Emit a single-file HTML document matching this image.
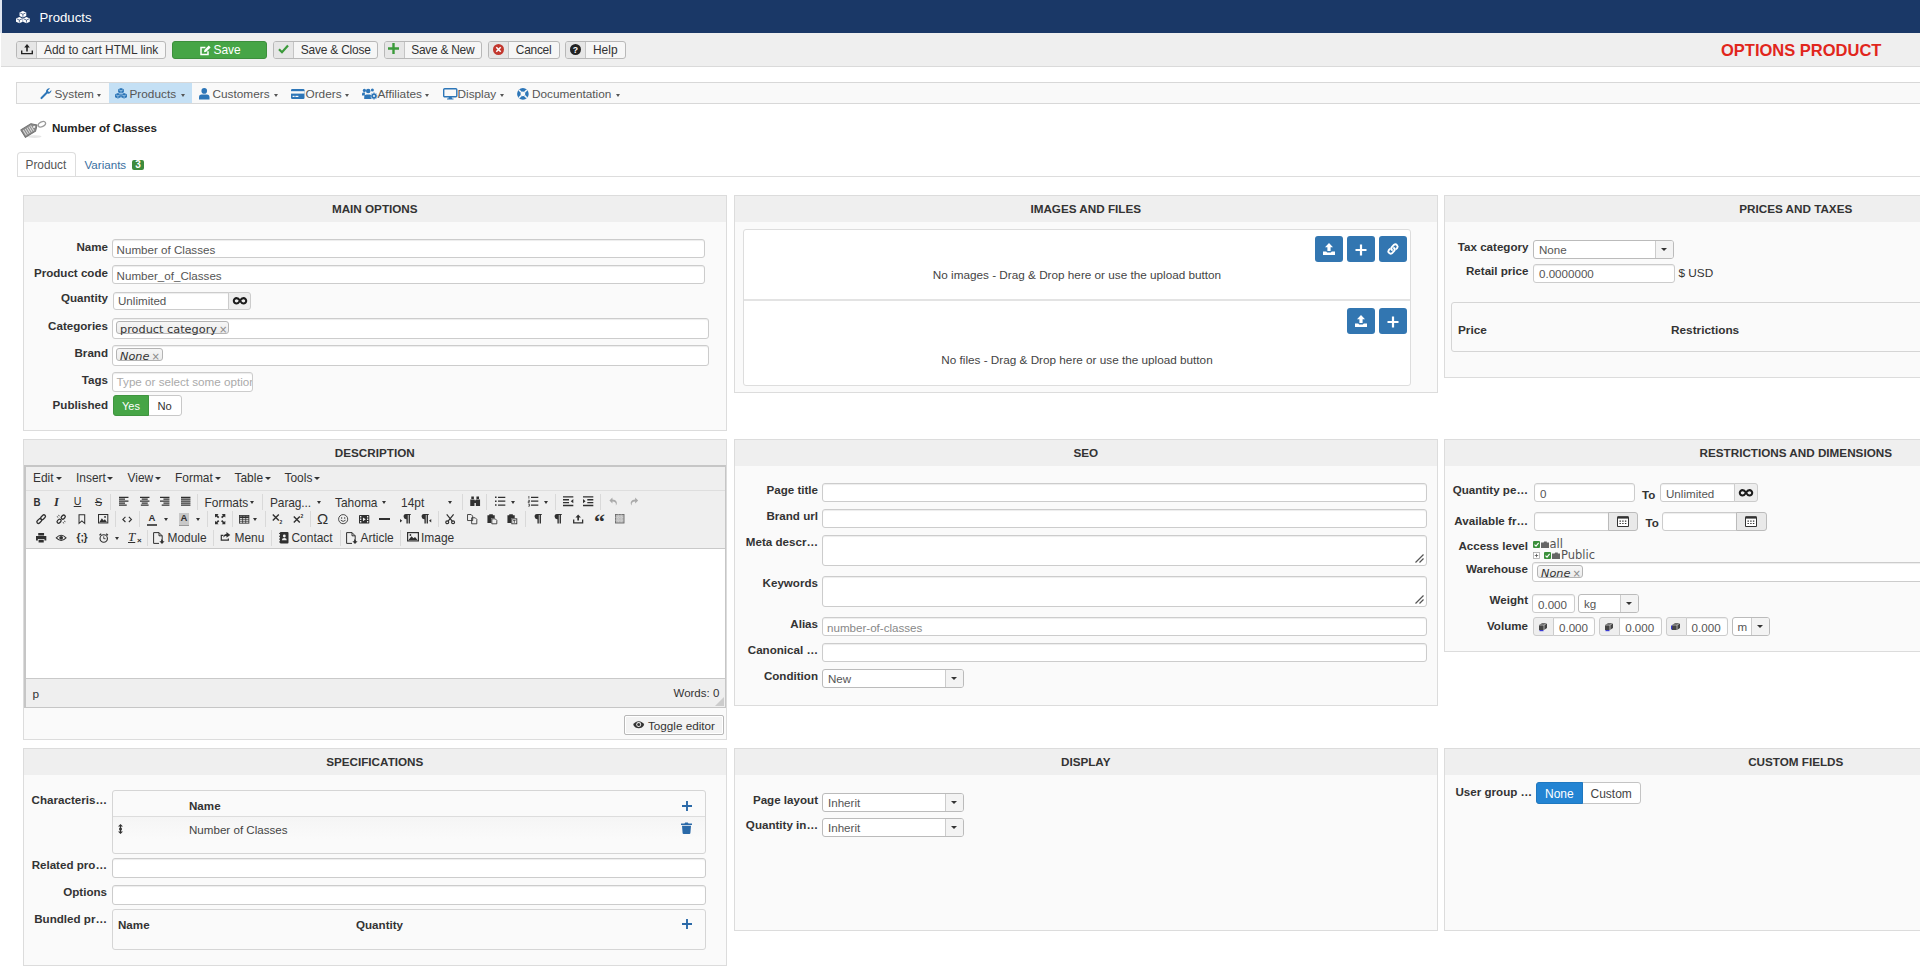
<!DOCTYPE html><html lang="en"><head><meta charset="utf-8"><title>Products</title><style>
*{box-sizing:border-box;margin:0;padding:0}
html,body{width:1920px;height:980px;overflow:hidden;background:#fff}
body{position:relative;font-family:"Liberation Sans",sans-serif;font-size:12px;color:#333}
.a{position:absolute}
.t{position:absolute;white-space:nowrap;line-height:16px;height:16px}
.b{font-weight:bold}
.r{text-align:right}
.lbl{position:absolute;white-space:nowrap;line-height:16px;height:16px;font-weight:bold;text-align:right;font-size:11.6px;color:#333}
.panel{position:absolute;background:#fafafa;border:1px solid #dcdcdc}
.ph{position:absolute;left:0;right:0;top:0;height:26px;background:#efefef;text-align:center;font-weight:bold;font-size:11.7px;line-height:26px;color:#333}
.in{position:absolute;background:#fff;border:1px solid #ccc;border-radius:3px;box-shadow:inset 0 1px 1px rgba(0,0,0,.075);color:#555;font-size:11.6px;line-height:18px;padding-left:4px;white-space:nowrap;overflow:hidden}
.box{position:absolute;background:#fafafa;border:1px solid #d5d5d5;border-radius:3px}
.wbox{position:absolute;background:#fff;border:1px solid #ddd;border-radius:3px}
.sel{position:absolute;background:#fff;border:1px solid #bbb;border-radius:3px;color:#555;font-size:11.6px;line-height:17px;padding-left:5px;white-space:nowrap;overflow:hidden}
.sel i{position:absolute;right:0;top:0;bottom:0;width:18px;background:#f3f3f3;border-left:1px solid #ccc}
.sel i:after{content:"";position:absolute;left:5px;top:7px;border:3.2px solid transparent;border-top:3.5px solid #333;border-bottom:0}
.tag{position:absolute;border:1px solid #b4b4b4;border-radius:3px;background:linear-gradient(#f6f6f6,#ececec);font-family:"DejaVu Sans",sans-serif;font-size:11.3px;line-height:16px;color:#333;white-space:nowrap;padding-left:3px}
.tag u{text-decoration:none;color:#888;font-size:10px;margin-left:2px}
.tbtn{position:absolute;top:41px;height:18px;border:1px solid #b8b8b8;border-radius:3px;background:#f6f6f6;font-size:11.95px;line-height:16px;color:#333;white-space:nowrap;overflow:hidden}
.tbtn b{position:absolute;left:0;top:0;bottom:0;width:20px;background:#e6e6e6;border-right:1px solid #c4c4c4}
.tbtn span{position:absolute;top:0}
.mi{position:absolute;top:85px;height:19px;line-height:19px;font-size:11.8px;color:#555;white-space:nowrap}
.car{position:absolute;width:0;height:0;border:3px solid transparent;border-top:3.5px solid #555;border-bottom:0}
.bb{position:absolute;width:28px;height:26px;background:#3276b1;border-radius:3px}
.ed{font-size:11.95px;color:#333}
.sep{position:absolute;width:1px;height:16px;background:#d9d9d9}
svg{position:absolute;overflow:visible}
</style></head><body>
<div class="a" style="left:0;top:0;width:2px;height:33px;background:#dfe6f1"></div><div class="a" style="left:1.5px;top:0;width:1919px;height:33px;background:#1a3867"></div>
<div class="t" style="left:39.5px;top:10px;color:#fff;font-size:13.2px">Products</div>
<div class="a" style="left:1px;top:33px;width:1919px;height:34px;background:#efefef;border-bottom:1px solid #dadada"></div>
<div class="t b" style="left:1721px;top:40px;height:20px;line-height:20px;font-size:16.5px;color:#e1261c">OPTIONS PRODUCT</div>
<div class="tbtn" style="left:16px;width:150px"><b></b><span style="left:27px;letter-spacing:0px">Add to cart HTML link</span></div>
<div class="a" style="left:171.5px;top:41px;width:95.5px;height:18px;background:#46a546;border:1px solid #3c8f3c;border-radius:3px"></div>
<div class="t" style="left:213.5px;top:42px;color:#fff;font-size:11.95px">Save</div>
<div class="tbtn" style="left:273px;width:105px"><b></b><span style="left:26.69999999999999px;letter-spacing:-0.19px">Save &amp; Close</span></div>
<div class="tbtn" style="left:384px;width:98px"><b></b><span style="left:26.30000000000001px;letter-spacing:-0.27px">Save &amp; New</span></div>
<div class="tbtn" style="left:488px;width:71.5px"><b></b><span style="left:26.799999999999955px;letter-spacing:-0.27px">Cancel</span></div>
<div class="tbtn" style="left:565px;width:60.5px"><b></b><span style="left:27px;letter-spacing:0px">Help</span></div>
<div class="a" style="left:16px;top:82px;width:1910px;height:22px;background:#f9f9f9;border:1px solid #d8d8d8"></div>
<div class="a" style="left:109px;top:83px;width:83px;height:20px;background:#c4e0f5"></div>
<div class="mi" style="left:54.5px">System</div>
<div class="car" style="left:97.3px;top:94px;border-width:2.7px;border-top:3.1px solid #555;border-bottom:0"></div>
<div class="mi" style="left:129.5px">Products</div>
<div class="car" style="left:181.3px;top:94px;border-width:2.7px;border-top:3.1px solid #555;border-bottom:0"></div>
<div class="mi" style="left:212.5px">Customers</div>
<div class="car" style="left:273.8px;top:94px;border-width:2.7px;border-top:3.1px solid #555;border-bottom:0"></div>
<div class="mi" style="left:305.5px">Orders</div>
<div class="car" style="left:345.3px;top:94px;border-width:2.7px;border-top:3.1px solid #555;border-bottom:0"></div>
<div class="mi" style="left:377.5px">Affiliates</div>
<div class="car" style="left:425.3px;top:94px;border-width:2.7px;border-top:3.1px solid #555;border-bottom:0"></div>
<div class="mi" style="left:457.5px">Display</div>
<div class="car" style="left:499.8px;top:94px;border-width:2.7px;border-top:3.1px solid #555;border-bottom:0"></div>
<div class="mi" style="left:532px">Documentation</div>
<div class="car" style="left:615.8px;top:94px;border-width:2.7px;border-top:3.1px solid #555;border-bottom:0"></div>
<div class="t b" style="left:51.9px;top:120px;font-size:11.6px;color:#222">Number of Classes</div>
<div class="a" style="left:17px;top:152px;width:59px;height:25px;background:#fff;border:1px solid #ddd;border-bottom:0;border-radius:4px 4px 0 0"></div>
<div class="a" style="left:17px;top:176px;width:1910px;height:1px;background:#ddd"></div>
<div class="t" style="left:25.5px;top:157px;font-size:11.85px;color:#555">Product</div>
<div class="t" style="left:84.5px;top:157px;font-size:11.6px;color:#3a6f9f">Variants</div>
<div class="a" style="left:132px;top:160px;width:12px;height:10px;background:#3d8b3d;border-radius:2px;color:#fff;font-size:10px;font-weight:bold;line-height:10.5px;text-align:center">3</div>
<div class="panel" style="left:23px;top:195px;width:703.5px;height:236px"><div class="ph">MAIN OPTIONS</div></div>
<div class="panel" style="left:734px;top:195px;width:703.5px;height:198px"><div class="ph">IMAGES AND FILES</div></div>
<div class="panel" style="left:1444px;top:195px;width:703.5px;height:183px"><div class="ph">PRICES AND TAXES</div></div>
<div class="panel" style="left:23px;top:439px;width:703.5px;height:301px"><div class="ph">DESCRIPTION</div></div>
<div class="panel" style="left:734px;top:439px;width:703.5px;height:267px"><div class="ph">SEO</div></div>
<div class="panel" style="left:1444px;top:439px;width:703.5px;height:213px"><div class="ph">RESTRICTIONS AND DIMENSIONS</div></div>
<div class="panel" style="left:23px;top:748px;width:703.5px;height:218px"><div class="ph">SPECIFICATIONS</div></div>
<div class="panel" style="left:734px;top:748px;width:703.5px;height:183px"><div class="ph">DISPLAY</div></div>
<div class="panel" style="left:1444px;top:748px;width:703.5px;height:183px"><div class="ph">CUSTOM FIELDS</div></div>
<svg style="left:15.8px;top:11px" width="13.8" height="12.3" viewBox="0 0 14 12.3"><path d="M3.6 1.5L7.0 0L10.4 1.5V4.9L7.0 6.4L3.6 4.9Z" fill="#fff"/><path d="M4.3 2L7.0 3.2L9.7 2M7.0 3.2V5.8" stroke="#1a3867" stroke-width="0.7" fill="none"/><path d="M0 7.4L3.4 5.9L6.8 7.4V10.8L3.4 12.3L0 10.8Z" fill="#fff"/><path d="M0.7 7.9L3.4 9.100000000000001L6.1 7.9M3.4 9.100000000000001V11.7" stroke="#1a3867" stroke-width="0.7" fill="none"/><path d="M7.2 7.4L10.6 5.9L14.0 7.4V10.8L10.6 12.3L7.2 10.8Z" fill="#fff"/><path d="M7.9 7.9L10.6 9.100000000000001L13.3 7.9M10.6 9.100000000000001V11.7" stroke="#1a3867" stroke-width="0.7" fill="none"/></svg>
<svg style="left:20.8px;top:44px" width="12" height="10.5" viewBox="0 0 12 10.5"><path d="M6 0 8.8 3.4H6.8V7.4H5.2V3.4H3.2Z" fill="#222"/><path d="M0.7 6.6V9.6H11.3V6.6" fill="none" stroke="#222" stroke-width="1.4"/></svg>
<svg style="left:199.5px;top:44.5px" width="11" height="11" viewBox="0 0 11 11"><path d="M8 6.2V9.6H1V2.6H5.4" fill="none" stroke="#fff" stroke-width="1.5"/><path d="M4 7.2 4.4 5 8.8 0.6 10.6 2.4 6.2 6.8Z" fill="#fff"/></svg>
<svg style="left:277.5px;top:43.5px" width="11" height="10" viewBox="0 0 11 10"><path d="M1 5.2 4 8.2 10 1.6" fill="none" stroke="#3a9a3a" stroke-width="2.2"/></svg>
<svg style="left:388px;top:43px" width="11" height="11" viewBox="0 0 11 11"><path d="M5.5 0V11M0 5.5H11" stroke="#3a9a3a" stroke-width="2.4" fill="none"/></svg>
<svg style="left:492.5px;top:44px" width="11" height="11" viewBox="0 0 12 12"><circle cx="6" cy="6" r="6" fill="#c2372e"/><path d="M3.6 3.6 8.4 8.4M8.4 3.6 3.6 8.4" stroke="#fff" stroke-width="1.7"/></svg>
<svg style="left:570px;top:44px" width="11" height="11" viewBox="0 0 12 12"><circle cx="6" cy="6" r="6" fill="#222"/><text x="6" y="9.3" font-size="9.5" font-weight="bold" text-anchor="middle" fill="#fff" font-family="Liberation Sans,sans-serif">?</text></svg>
<svg style="left:39.5px;top:88px" width="11.5" height="11.5" viewBox="0 0 11.5 11.5"><path d="M0.8 9.3 6 4.1A3.3 3.3 0 0 1 10 0.4L7.9 2.5 8.3 3.6 9.4 4 11.4 1.9A3.3 3.3 0 0 1 7.4 5.6L2.2 10.8A1 1 0 0 1 0.8 9.3Z" fill="#2d76b8"/></svg>
<svg style="left:114.5px;top:88px" width="12" height="10.6" viewBox="0 0 14 12.3"><path d="M3.6 1.5L7.0 0L10.4 1.5V4.9L7.0 6.4L3.6 4.9Z" fill="#2d76b8"/><path d="M4.3 2L7.0 3.2L9.7 2M7.0 3.2V5.8" stroke="#c4e0f5" stroke-width="0.7" fill="none"/><path d="M0 7.4L3.4 5.9L6.8 7.4V10.8L3.4 12.3L0 10.8Z" fill="#2d76b8"/><path d="M0.7 7.9L3.4 9.100000000000001L6.1 7.9M3.4 9.100000000000001V11.7" stroke="#c4e0f5" stroke-width="0.7" fill="none"/><path d="M7.2 7.4L10.6 5.9L14.0 7.4V10.8L10.6 12.3L7.2 10.8Z" fill="#2d76b8"/><path d="M7.9 7.9L10.6 9.100000000000001L13.3 7.9M10.6 9.100000000000001V11.7" stroke="#c4e0f5" stroke-width="0.7" fill="none"/></svg>
<svg style="left:198.5px;top:87.5px" width="10.5" height="11.5" viewBox="0 0 10.5 11.5"><circle cx="5.25" cy="2.9" r="2.8" fill="#2d76b8"/><path d="M0 11.5V9.4Q0 6.6 2.6 6.6H7.9Q10.5 6.6 10.5 9.4V11.5Z" fill="#2d76b8"/></svg>
<svg style="left:290.5px;top:88.5px" width="13.5" height="10" viewBox="0 0 13.5 10"><rect x="0" y="0" width="13.5" height="10" rx="1.2" fill="#2d76b8"/><rect x="0" y="2.2" width="13.5" height="2.4" fill="#f9f9f9"/><rect x="1.6" y="6.8" width="2" height="1.2" fill="#f9f9f9"/><rect x="4.4" y="6.8" width="3" height="1.2" fill="#f9f9f9"/></svg>
<svg style="left:362px;top:88px" width="15" height="11" viewBox="0 0 15 11"><circle cx="2.4" cy="2.4" r="1.6" fill="#2d76b8"/><circle cx="6.2" cy="3" r="2.3" fill="#2d76b8"/><circle cx="10.4" cy="2" r="1.5" fill="#2d76b8"/><path d="M0 7.4V6Q0 4.6 1.6 4.6H3.2Q2.4 6 3 7.4ZM2.2 11V9.2Q2.2 6.4 4.6 6.4H7.8Q8.6 6.4 9 7 8.2 9 9.4 11Z" fill="#2d76b8"/><circle cx="12" cy="8" r="2.6" fill="#2d76b8"/><path d="M12 4.6V11.4M8.6 8H15.4M9.6 5.6 14.4 10.4M14.4 5.6 9.6 10.4" stroke="#2d76b8" stroke-width="1.1"/><circle cx="12" cy="8" r="1" fill="#f9f9f9"/></svg>
<svg style="left:442.5px;top:88px" width="14.5" height="11.5" viewBox="0 0 14.5 11.5"><rect x="0.7" y="0.7" width="13.1" height="8" rx="1" fill="none" stroke="#2d76b8" stroke-width="1.4"/><path d="M6 8.6 5.4 10.4H4V11.5H10.5V10.4H9.1L8.5 8.6Z" fill="#2d76b8"/></svg>
<svg style="left:517px;top:87.8px" width="11.8" height="11.8" viewBox="0 0 11.8 11.8"><circle cx="5.9" cy="5.9" r="4.1" fill="none" stroke="#2d76b8" stroke-width="3.4"/><path d="M2 2 4.2 4.2M9.8 2 7.6 4.2M2 9.8 4.2 7.6M9.8 9.8 7.6 7.6" stroke="#f9f9f9" stroke-width="1.5"/></svg>
<svg style="left:19px;top:118px" width="28" height="22" viewBox="0 0 28 22"><ellipse cx="15.5" cy="18.6" rx="7" ry="1.4" fill="#e6e6e6"/><g transform="translate(0.4 -0.2) rotate(-32 10 12)"><path d="M2.6 7.6H14.6L19 12 14.6 16.4H2.6Z" fill="#8a8a8a" stroke="#6e6e6e" stroke-width="0.9" stroke-linejoin="round"/><path d="M4.6 9V15M6.8 9V15M9 9V15M11.2 9V15M13.2 9V15" stroke="#d8d8d8" stroke-width="1.1"/><circle cx="15.6" cy="12" r="1.1" fill="#f2f2f2"/></g><ellipse cx="22.6" cy="6.2" rx="3.9" ry="2.4" fill="none" stroke="#9a9a9a" stroke-width="1.3" transform="rotate(-25 22.8 5.6)"/></svg>
<div class="lbl" style="right:1812px;top:239px">Name</div>
<div class="in" style="left:111.6px;top:239.2px;width:593.2px;height:19.2px;padding-top:0.6px">Number of Classes</div>
<div class="lbl" style="right:1812px;top:265px">Product code</div>
<div class="in" style="left:111.6px;top:265.2px;width:593.2px;height:19px;padding-top:0.6px">Number_of_Classes</div>
<div class="lbl" style="right:1812px;top:290px">Quantity</div>
<div class="in" style="left:113px;top:292px;width:116px;height:18px;border-radius:3px 0 0 3px;line-height:16px;padding-left:4px">Unlimited</div>
<div class="a" style="left:228px;top:292px;width:23px;height:18px;background:#eee;border:1px solid #ccc;border-radius:0 3px 3px 0"></div>
<svg style="left:232.5px;top:297.2px" width="14" height="7.6" viewBox="0 0 14 7.6"><path d="M7 3.8C5.8 1.8 4.7 1.1 3.5 1.1a2.7 2.7 0 1 0 0 5.4C4.7 6.5 5.8 5.8 7 3.8S9.3 1.1 10.5 1.1a2.7 2.7 0 1 1 0 5.4C9.3 6.5 8.2 5.8 7 3.8Z" fill="none" stroke="#1c1c1c" stroke-width="2.1"/></svg>
<div class="lbl" style="right:1812px;top:318px">Categories</div>
<div class="in" style="left:112px;top:318px;width:597px;height:21px"></div>
<div class="tag" style="left:116px;top:321px;width:113px;height:13px">product category<u>×</u></div>
<div class="lbl" style="right:1812px;top:345px">Brand</div>
<div class="in" style="left:112px;top:345px;width:597px;height:21px"></div>
<div class="tag" style="left:116px;top:348px;width:46.5px;height:13px"><em>None</em><u>×</u></div>
<div class="lbl" style="right:1812px;top:372px">Tags</div>
<div class="in" style="left:111.6px;top:372.3px;width:141.6px;height:19.3px;color:#aaa;line-height:17px;font-size:11.65px">Type or select some option</div>
<div class="lbl" style="right:1812px;top:397px">Published</div>
<div class="a" style="left:113px;top:395px;width:69px;height:21px;background:#fff;border:1px solid #c8c8c8;border-radius:3px"></div>
<div class="a" style="left:113px;top:395px;width:36px;height:21px;background:#46a546;border:1px solid #3f943f;border-radius:3px 0 0 3px"></div>
<div class="t " style="left:122px;top:398.3px;color:#fff;font-size:11px">Yes</div>
<div class="t " style="left:157.5px;top:398.3px;color:#333;font-size:11.2px">No</div>
<div class="wbox" style="left:743px;top:229px;width:668px;height:157px"></div>
<div class="a" style="left:744px;top:299.3px;width:666px;height:2px;background:#e3e3e3"></div>
<div class="t" style="left:743px;width:668px;text-align:center;top:267px;font-size:11.74px;color:#444">No images - Drag &amp; Drop here or use the upload button</div>
<div class="t" style="left:743px;width:668px;text-align:center;top:352px;font-size:11.74px;color:#444">No files - Drag &amp; Drop here or use the upload button</div>
<div class="bb" style="left:1315px;top:236px"><svg style="left:8px;top:7px" width="12" height="12" viewBox="0 0 12 12"><path d="M6 0 10 4.3H7.6V8H4.4V4.3H2Z M0 8.6H3.2L4.2 9.6H7.8L8.8 8.6H12V12H0Z" fill="#fff"/></svg></div>
<div class="bb" style="left:1347px;top:236px"><svg style="left:8px;top:8px" width="12" height="12" viewBox="0 0 12 12"><path d="M6 0.5V11.5M0.5 6H11.5" stroke="#fff" stroke-width="2.2" fill="none"/></svg></div>
<div class="bb" style="left:1379px;top:236px"><svg style="left:8px;top:7px" width="12" height="12" viewBox="0 0 12 12"><g fill="none" stroke="#fff" stroke-width="1.9" stroke-linecap="round"><path d="M5 7 A2.3 2.3 0 0 1 5 3.8L7 1.8A2.3 2.3 0 0 1 10.2 5L9.3 5.9"/><path d="M7 5A2.3 2.3 0 0 1 7 8.2L5 10.2A2.3 2.3 0 0 1 1.8 7L2.7 6.1"/></g></svg></div>
<div class="bb" style="left:1347px;top:308px"><svg style="left:8px;top:7px" width="12" height="12" viewBox="0 0 12 12"><path d="M6 0 10 4.3H7.6V8H4.4V4.3H2Z M0 8.6H3.2L4.2 9.6H7.8L8.8 8.6H12V12H0Z" fill="#fff"/></svg></div>
<div class="bb" style="left:1379px;top:308px"><svg style="left:8px;top:8px" width="12" height="12" viewBox="0 0 12 12"><path d="M6 0.5V11.5M0.5 6H11.5" stroke="#fff" stroke-width="2.2" fill="none"/></svg></div>
<div class="lbl" style="right:391.5px;top:239px">Tax category</div>
<div class="sel" style="left:1533px;top:240px;width:141px;height:19px">None<i></i></div>
<div class="lbl" style="right:391.5px;top:263px">Retail price</div>
<div class="in" style="left:1533px;top:264px;width:142px;height:19px;line-height:18px;padding-left:5px">0.0000000</div>
<div class="t " style="left:1678.5px;top:265px;font-size:11.8px;color:#333">$ USD</div>
<div class="box" style="left:1451px;top:302px;width:700px;height:50px"></div>
<div class="t b" style="left:1458px;top:321.5px;font-size:11.8px">Price</div>
<div class="t b" style="left:1671px;top:321.5px;font-size:11.8px">Restrictions</div>
<div class="a" style="left:24px;top:465px;width:701.6px;height:243px;background:#efefef;border:1px solid #c6c6c6;border-left-width:2px;border-top-width:2px"></div>
<div class="a" style="left:26px;top:490px;width:699px;height:1px;background:#dedede"></div>
<div class="a" style="left:26px;top:548px;width:699px;height:131px;background:#fff;border-top:1px solid #c9c9c9;border-bottom:1px solid #c9c9c9"></div>
<div class="t ed" style="left:33px;top:470px;">Edit</div>
<div class="car" style="left:56px;top:477px;border-top-color:#333"></div>
<div class="t ed" style="left:76px;top:470px;">Insert</div>
<div class="car" style="left:107px;top:477px;border-top-color:#333"></div>
<div class="t ed" style="left:127.5px;top:470px;">View</div>
<div class="car" style="left:154.5px;top:477px;border-top-color:#333"></div>
<div class="t ed" style="left:175px;top:470px;">Format</div>
<div class="car" style="left:214.5px;top:477px;border-top-color:#333"></div>
<div class="t ed" style="left:234.5px;top:470px;">Table</div>
<div class="car" style="left:264.5px;top:477px;border-top-color:#333"></div>
<div class="t ed" style="left:284.5px;top:470px;">Tools</div>
<div class="car" style="left:314px;top:477px;border-top-color:#333"></div>
<div class="t" style="left:26.5px;width:20px;text-align:center;top:493.5px;font-size:12px;color:#303030;font-weight:bold;font-size:11.5px;transform:scaleX(.85)">B</div>
<div class="t" style="left:46.5px;width:20px;text-align:center;top:493.5px;font-size:12px;color:#303030;font-style:italic;font-family:'Liberation Serif',serif;font-weight:bold;font-size:12.5px">I</div>
<div class="t" style="left:67.5px;width:20px;text-align:center;top:493.0px;font-size:12px;color:#303030;text-decoration:underline;font-size:10.5px">U</div>
<div class="t" style="left:88.5px;width:20px;text-align:center;top:493.5px;font-size:12px;color:#303030;text-decoration:line-through;font-size:10.8px">S</div>
<div class="sep" style="left:110px;top:493.5px"></div>
<svg style="left:118.77px;top:496.34px" width="9.46" height="10.32" viewBox="0 0 11 12"><path d="M0 1.5H11M0 3.75H7M0 6H11M0 8.25H7M0 10.5H9" stroke="#303030" stroke-width="1.5" fill="none"/></svg>
<svg style="left:139.77px;top:496.34px" width="9.46" height="10.32" viewBox="0 0 11 12"><path d="M0 1.5H11M2 3.75H9M0 6H11M2 8.25H9M1 10.5H10" stroke="#303030" stroke-width="1.5" fill="none"/></svg>
<svg style="left:160.27px;top:496.34px" width="9.46" height="10.32" viewBox="0 0 11 12"><path d="M0 1.5H11M4 3.75H11M0 6H11M4 8.25H11M2 10.5H11" stroke="#303030" stroke-width="1.5" fill="none"/></svg>
<svg style="left:180.77px;top:496.34px" width="9.46" height="10.32" viewBox="0 0 11 12"><path d="M0 1.5H11M0 3.75H11M0 6H11M0 8.25H11M0 10.5H11" stroke="#303030" stroke-width="1.5" fill="none"/></svg>
<div class="sep" style="left:197px;top:493.5px"></div>
<div class="t ed" style="left:204.5px;top:494.7px;">Formats</div>
<div class="car" style="left:250.2px;top:500.5px;border-width:2.8px;border-top:3.1999999999999997px solid #333;border-bottom:0"></div>
<div class="sep" style="left:262px;top:493.5px"></div>
<div class="t ed" style="left:270px;top:494.7px;letter-spacing:-0.1px">Parag...</div>
<div class="car" style="left:316.7px;top:500.5px;border-width:2.8px;border-top:3.1999999999999997px solid #333;border-bottom:0"></div>
<div class="t ed" style="left:335px;top:494.7px;">Tahoma</div>
<div class="car" style="left:382.2px;top:500.5px;border-width:2.8px;border-top:3.1999999999999997px solid #333;border-bottom:0"></div>
<div class="t ed" style="left:401px;top:494.7px;">14pt</div>
<div class="car" style="left:447.7px;top:500.5px;border-width:2.8px;border-top:3.1999999999999997px solid #333;border-bottom:0"></div>
<div class="sep" style="left:462px;top:493.5px"></div>
<svg style="left:469.84px;top:496.34px" width="10.32" height="10.32" viewBox="0 0 12 12"><path d="M1.5 0.5h3v3h-3zM7.5 0.5h3v3h-3zM0.3 4h4.9v7.5H0.3zM6.8 4h4.9v7.5H6.8zM5 5h2v3H5z" fill="#303030"/></svg>
<div class="sep" style="left:486px;top:493.5px"></div>
<svg style="left:495.34px;top:496.34px" width="10.32" height="10.32" viewBox="0 0 12 12"><path d="M0 1.5h1.8M0 6h1.8M0 10.5h1.8" stroke="#303030" stroke-width="1.8"/><path d="M3.5 1.5H12M3.5 6H12M3.5 10.5H12" stroke="#303030" stroke-width="1.5"/></svg>
<div class="car" style="left:511.2px;top:500.5px;border-width:2.8px;border-top:3.1999999999999997px solid #333;border-bottom:0"></div>
<svg style="left:527.84px;top:496.34px" width="10.32" height="10.32" viewBox="0 0 12 12"><path d="M1 0v3M0.2 5h1.6v1.5H0.2v1.2h1.6M0.2 9.5h1.6v2.3H0.2" stroke="#303030" stroke-width="0.9" fill="none"/><path d="M3.5 1.5H12M3.5 6H12M3.5 10.5H12" stroke="#303030" stroke-width="1.5"/></svg>
<div class="car" style="left:543.7px;top:500.5px;border-width:2.8px;border-top:3.1999999999999997px solid #333;border-bottom:0"></div>
<div class="sep" style="left:555px;top:493.5px"></div>
<svg style="left:562.84px;top:496.34px" width="10.32" height="10.32" viewBox="0 0 12 12"><path d="M0 1H12M0 4.3H7M0 7.7H7M0 11H12" stroke="#303030" stroke-width="1.6"/><path d="M12 3.6V8.4L9 6Z" fill="#303030"/></svg>
<svg style="left:583.34px;top:496.34px" width="10.32" height="10.32" viewBox="0 0 12 12"><path d="M0 1H12M5 4.3H12M5 7.7H12M0 11H12" stroke="#303030" stroke-width="1.6"/><path d="M0 3.6V8.4L3 6Z" fill="#303030"/></svg>
<div class="sep" style="left:600px;top:493.5px"></div>
<svg style="left:608.70px;top:497.20px" width="8.6" height="8.6" viewBox="0 0 10 10"><path d="M4 0.5 0.5 4 4 7.5V5.2C7 5.2 8.6 6.6 8 10 10.6 6.5 8.5 2.8 4 2.8Z" fill="#aaa"/></svg>
<svg style="left:629.70px;top:497.20px" width="8.6" height="8.6" viewBox="0 0 10 10"><path d="M6 0.5 9.5 4 6 7.5V5.2C3 5.2 1.4 6.6 2 10-0.6 6.5 1.5 2.8 6 2.8Z" fill="#aaa"/></svg>
<svg style="left:35.84px;top:513.84px" width="10.32" height="10.32" viewBox="0 0 12 12"><g fill="none" stroke="#303030" stroke-width="1.5"><rect x="-1.8" y="-3.2" width="3.6" height="6.4" rx="1.8" transform="translate(3.8 8.2) rotate(45)"/><rect x="-1.8" y="-3.2" width="3.6" height="6.4" rx="1.8" transform="translate(8.2 3.8) rotate(45)"/></g></svg>
<svg style="left:55.84px;top:513.84px" width="10.32" height="10.32" viewBox="0 0 12 12"><g fill="none" stroke="#303030" stroke-width="1.5"><rect x="-1.8" y="-2.6" width="3.6" height="5.2" rx="1.8" transform="translate(3.6 8.4) rotate(45)"/><rect x="-1.8" y="-2.6" width="3.6" height="5.2" rx="1.8" transform="translate(8.4 3.6) rotate(45)"/><path d="M1 3 2.6 3.8M3 1 3.8 2.6M11 9 9.4 8.2M9 11 8.2 9.4" stroke-width="1"/></g></svg>
<svg style="left:78.13px;top:513.84px" width="7.74" height="10.32" viewBox="0 0 9 12"><path d="M1.2 0.8H7.8V10.8L4.5 8 1.2 10.8Z" fill="none" stroke="#303030" stroke-width="1.2"/></svg>
<svg style="left:97.84px;top:514.27px" width="10.32" height="9.46" viewBox="0 0 12 11"><rect x="0.6" y="0.6" width="10.8" height="9.8" fill="none" stroke="#303030" stroke-width="1.2"/><path d="M1.5 9.5 4.5 5 6.5 7.5 8 6 10.5 9.5Z" fill="#303030"/><circle cx="8.2" cy="3.4" r="1.1" fill="#303030"/></svg>
<div class="sep" style="left:115px;top:511px"></div>
<svg style="left:122.34px;top:515.56px" width="10.32" height="6.88" viewBox="0 0 12 8"><path d="M4 1 1 4 4 7M8 1 11 4 8 7" fill="none" stroke="#303030" stroke-width="1.3"/></svg>
<div class="sep" style="left:139px;top:511px"></div>
<div class="t" style="left:142px;width:20px;text-align:center;top:510px;font-size:12px;color:#303030;font-weight:bold;font-size:9.5px">A</div>
<div class="a" style="left:147px;top:524px;width:10px;height:1.5px;background:#555"></div>
<div class="car" style="left:163.7px;top:518px;border-width:2.8px;border-top:3.1999999999999997px solid #333;border-bottom:0"></div>
<div class="a" style="left:179px;top:512.5px;width:10px;height:13px;background:#c8c8c8;border-bottom:1.5px solid #999"></div>
<div class="t" style="left:174px;width:20px;text-align:center;top:510px;font-size:12px;color:#303030;font-weight:bold;font-size:9.5px">A</div>
<div class="car" style="left:196.2px;top:518px;border-width:2.8px;border-top:3.1999999999999997px solid #333;border-bottom:0"></div>
<div class="sep" style="left:207px;top:511px"></div>
<svg style="left:214.84px;top:513.84px" width="10.32" height="10.32" viewBox="0 0 12 12"><path d="M0 0H4.2L2.8 1.4 5 3.6 3.6 5 1.4 2.8 0 4.2ZM12 0V4.2L10.6 2.8 8.4 5 7 3.6 9.2 1.4 7.8 0ZM0 12V7.8L1.4 9.2 3.6 7 5 8.4 2.8 10.6 4.2 12ZM12 12H7.8L9.2 10.6 7 8.4 8.4 7 10.6 9.2 12 7.8Z" fill="#303030"/></svg>
<div class="sep" style="left:232px;top:511px"></div>
<svg style="left:239.34px;top:514.70px" width="10.32" height="8.6" viewBox="0 0 12 10"><rect x="0.5" y="0.5" width="11" height="9" fill="none" stroke="#303030" stroke-width="1"/><path d="M0.5 2.5H11.5" stroke="#303030" stroke-width="2"/><path d="M0.5 5H11.5M0.5 7.3H11.5M4.2 1V9.5M7.8 1V9.5" stroke="#303030" stroke-width="0.9"/></svg>
<div class="car" style="left:252.7px;top:518px;border-width:2.8px;border-top:3.1999999999999997px solid #333;border-bottom:0"></div>
<div class="sep" style="left:265px;top:511px"></div>
<svg style="left:271.50px;top:513.00px" width="12" height="12" viewBox="0 0 12 12"><path d="M0.8 1.5 6.8 7.5M6.8 1.5 0.8 7.5" stroke="#303030" stroke-width="1.4"/><text x="7.6" y="11" font-size="5" font-weight="bold" font-family="Liberation Sans,sans-serif" fill="#303030">2</text></svg>
<svg style="left:292.50px;top:513.00px" width="12" height="12" viewBox="0 0 12 12"><path d="M0.8 3.5 6.8 9.5M6.8 3.5 0.8 9.5" stroke="#303030" stroke-width="1.4"/><text x="7.6" y="4.5" font-size="5" font-weight="bold" font-family="Liberation Sans,sans-serif" fill="#303030">2</text></svg>
<div class="sep" style="left:310px;top:511px"></div>
<div class="t" style="left:312.5px;width:20px;text-align:center;top:511px;font-size:12px;color:#303030;font-size:15px">Ω</div>
<svg style="left:338.34px;top:513.84px" width="10.32" height="10.32" viewBox="0 0 12 12"><circle cx="6" cy="6" r="5.3" fill="none" stroke="#303030" stroke-width="1"/><circle cx="4.2" cy="4.6" r="0.8" fill="#303030"/><circle cx="7.8" cy="4.6" r="0.8" fill="#303030"/><path d="M3.2 7.2Q6 10 8.8 7.2" fill="none" stroke="#303030" stroke-width="1"/></svg>
<svg style="left:358.84px;top:514.70px" width="10.32" height="8.6" viewBox="0 0 12 10"><rect x="0" y="0" width="12" height="10" rx="1" fill="#303030"/><path d="M1.2 1.3h1.5v1.5H1.2zM1.2 4.2h1.5v1.5H1.2zM1.2 7.1h1.5v1.5H1.2zM9.3 1.3h1.5v1.5H9.3zM9.3 4.2h1.5v1.5H9.3zM9.3 7.1h1.5v1.5H9.3zM4.6 2.8 7.8 5 4.6 7.2Z" fill="#efefef"/></svg>
<div class="a" style="left:379px;top:518.3px;width:11px;height:1.6px;background:#303030"></div>
<svg style="left:402.63px;top:514.27px" width="7.74" height="9.46" viewBox="0 0 9 11"><path d="M3.4 0H9V1.3H8.1V11H6.5V1.3H5.6V11H4V6A3 3 0 0 1 3.4 0Z" fill="#303030"/></svg>
<svg style="left:399.71px;top:519.28px" width="2.58" height="3.44" viewBox="0 0 3 4"><path d="M0 0 2.6 2 0 4Z" fill="#303030"/></svg>
<svg style="left:420.63px;top:514.27px" width="7.74" height="9.46" viewBox="0 0 9 11"><path d="M3.4 0H9V1.3H8.1V11H6.5V1.3H5.6V11H4V6A3 3 0 0 1 3.4 0Z" fill="#303030"/></svg>
<svg style="left:429.21px;top:519.28px" width="2.58" height="3.44" viewBox="0 0 3 4"><path d="M2.6 0 0 2 2.6 4Z" fill="#303030"/></svg>
<div class="sep" style="left:437.5px;top:511px"></div>
<svg style="left:445.34px;top:513.84px" width="10.32" height="10.32" viewBox="0 0 12 12"><g fill="none" stroke="#303030" stroke-width="1.4"><path d="M2 0.5 8.6 8.5M10 0.5 3.4 8.5"/><circle cx="2.6" cy="9.6" r="1.7"/><circle cx="9.4" cy="9.6" r="1.7"/></g></svg>
<svg style="left:466.84px;top:513.84px" width="10.32" height="10.32" viewBox="0 0 12 12"><path d="M0.6 0.6H4.8L6.6 2.4V7.6H0.6ZM5.4 4.4H9.6L11.4 6.2V11.4H5.4Z" fill="#efefef" stroke="#303030" stroke-width="1"/></svg>
<svg style="left:486.84px;top:513.84px" width="10.32" height="10.32" viewBox="0 0 12 12"><path d="M0.5 1.5H9V5H5V10.5H0.5Z" fill="#303030"/><rect x="2.6" y="0.3" width="4.2" height="2.2" fill="#303030"/><path d="M5.6 5.6H9.6L11.4 7.4V11.4H5.6Z" fill="#efefef" stroke="#303030" stroke-width="1"/></svg>
<svg style="left:507.34px;top:513.84px" width="10.32" height="10.32" viewBox="0 0 12 12"><path d="M0.5 1.5H9V5H5V10.5H0.5Z" fill="#303030"/><rect x="2.6" y="0.3" width="4.2" height="2.2" fill="#303030"/><rect x="5.6" y="5.6" width="5.8" height="5.8" fill="#efefef" stroke="#303030" stroke-width="1"/><path d="M7 7.4h3M8.5 7.4v3" stroke="#303030" stroke-width="0.9"/></svg>
<div class="sep" style="left:524.5px;top:511px"></div>
<svg style="left:533.63px;top:514.27px" width="7.74" height="9.46" viewBox="0 0 9 11"><path d="M3.4 0H9V1.3H8.1V11H6.5V1.3H5.6V11H4V6A3 3 0 0 1 3.4 0Z" fill="#303030"/></svg>
<svg style="left:554.13px;top:514.27px" width="7.74" height="9.46" viewBox="0 0 9 11"><path d="M3.4 0H9V1.3H8.1V11H6.5V1.3H5.6V11H4V6A3 3 0 0 1 3.4 0Z" fill="#303030"/></svg>
<svg style="left:573.34px;top:514.27px" width="10.32" height="9.46" viewBox="0 0 12 11"><path d="M6 0.5 9.2 4H7V7.5H5V4H2.8Z" fill="#303030"/><path d="M0.8 6.5V10.4H11.2V6.5" fill="none" stroke="#303030" stroke-width="1.5"/></svg>
<div class="t" style="left:589.5px;width:20px;text-align:center;top:514px;font-size:12px;color:#303030;font-weight:bold;font-size:22px;font-family:'Liberation Serif',serif;line-height:16px">“</div>
<svg style="left:615.27px;top:514.27px" width="9.46" height="9.46" viewBox="0 0 11 11"><rect x="0.5" y="0.5" width="10" height="10" fill="#bbb" stroke="#666" stroke-width="1"/><path d="M0.5 3.8H10.5M0.5 7.2H10.5M3.8 0.5V10.5M7.2 0.5V10.5" stroke="#eee" stroke-width="0.7" stroke-dasharray="1 1"/></svg>
<svg style="left:35.84px;top:532.77px" width="10.32" height="9.46" viewBox="0 0 12 11"><path d="M2.6 0h6.8v3H2.6zM0 3.6h12v5H9.8V7H2.2v1.6H0zM3 7.8h6V11H3z" fill="#303030"/></svg>
<svg style="left:56.34px;top:533.63px" width="10.32" height="7.74" viewBox="0 0 12 9"><path d="M0.3 4.5Q6-1.5 11.7 4.5 6 10.5 0.3 4.5Z" fill="none" stroke="#303030" stroke-width="1.2"/><circle cx="6" cy="4.5" r="2.2" fill="#303030"/></svg>
<div class="t" style="left:72px;width:20px;text-align:center;top:529.0px;font-size:10.5px;font-weight:bold;color:#303030;letter-spacing:-0.3px">{;}</div>
<svg style="left:98.77px;top:532.77px" width="9.46" height="9.46" viewBox="0 0 11 11"><circle cx="5.5" cy="6.4" r="4.3" fill="none" stroke="#303030" stroke-width="1.3"/><path d="M5.5 3.8V6.6H7.6" fill="none" stroke="#303030" stroke-width="1"/><path d="M0.6 2.6 2.6 0.8M10.4 2.6 8.4 0.8" stroke="#303030" stroke-width="1.4"/></svg>
<div class="car" style="left:114.7px;top:536.5px;border-width:2.8px;border-top:3.1999999999999997px solid #333;border-bottom:0"></div>
<div class="t" style="left:128px;top:528.5px;font-size:13px;font-style:italic;font-family:'Liberation Serif',serif;color:#303030;text-decoration:underline">T</div>
<div class="t" style="left:137px;top:533.0px;font-size:8px;font-weight:bold;color:#303030">×</div>
<div class="sep" style="left:146.5px;top:529.5px"></div>
<svg style="left:152.50px;top:531.50px" width="12" height="12" viewBox="0 0 12 12"><path d="M0.6 0.6H6L9.2 3.8V7M6 11.4H0.6V0.6M6 0.6V3.8H9.2" fill="none" stroke="#303030" stroke-width="1"/><path d="M9 7.2 11.6 10H9.9V12H8.1V10H6.4Z" fill="#303030" transform="rotate(180 9 9.6)"/></svg>
<div class="t ed" style="left:167.5px;top:530.3px;">Module</div>
<div class="sep" style="left:213px;top:529.5px"></div>
<svg style="left:219.84px;top:532.27px" width="10.32" height="9.46" viewBox="0 0 12 11"><path d="M0.8 3.2H4V4.6H2.2V8.8H9V7.6H10.4V10.2H0.8Z" fill="#303030"/><path d="M7.5 0 12 3.4 7.5 6.8V4.6C5.6 4.6 4.6 5.2 3.8 6.6 3.9 3.8 5.2 2.4 7.5 2.2Z" fill="#303030"/></svg>
<div class="t ed" style="left:234.5px;top:530.3px;">Menu</div>
<div class="sep" style="left:270.5px;top:529.5px"></div>
<svg style="left:278.75px;top:531.80px" width="9.5" height="11.4" viewBox="0 0 10 12"><rect x="1" y="0" width="9" height="12" rx="1" fill="#303030"/><path d="M0 1.5H1.6M0 4.5H1.6M0 7.5H1.6M0 10.5H1.6" stroke="#303030" stroke-width="1"/><circle cx="5.6" cy="4.2" r="1.5" fill="#efefef"/><path d="M3 8.8Q3 6.4 5.6 6.4 8.2 6.4 8.2 8.8Z" fill="#efefef"/></svg>
<div class="t ed" style="left:291.5px;top:530.3px;">Contact</div>
<div class="sep" style="left:339.5px;top:529.5px"></div>
<svg style="left:345.50px;top:531.50px" width="12" height="12" viewBox="0 0 12 12"><path d="M0.6 0.6H6L9.2 3.8V7M6 11.4H0.6V0.6M6 0.6V3.8H9.2" fill="none" stroke="#303030" stroke-width="1"/><path d="M9 7.2 11.6 10H9.9V12H8.1V10H6.4Z" fill="#303030" transform="rotate(180 9 9.6)"/></svg>
<div class="t ed" style="left:360.5px;top:530.3px;">Article</div>
<div class="sep" style="left:400px;top:529.5px"></div>
<svg style="left:407.00px;top:531.50px" width="12" height="10" viewBox="0 0 12 10"><rect x="0.6" y="0.6" width="10.8" height="8.3" fill="none" stroke="#303030" stroke-width="1.2"/><path d="M1.5 8 4.5 4.2 6.5 6.2 8 5 10.5 8Z" fill="#303030"/><circle cx="3.4" cy="3" r="0.9" fill="#303030"/></svg>
<div class="t ed" style="left:421px;top:530.3px;">Image</div>
<div class="t " style="left:32.5px;top:686px;font-size:11.8px;color:#333">p</div>
<div class="t " style="right:1200.7px;top:685.4px;font-size:11.5px;color:#333">Words: 0</div>
<svg style="left:715px;top:697px" width="9" height="9" viewBox="0 0 9 9"><path d="M9 0V9H0Z" fill="#ccc"/></svg>
<div class="a" style="left:623.5px;top:715.4px;width:100.4px;height:19.2px;background:#f3f3f3;border:1px solid #b8b8b8;border-radius:2px;box-shadow:inset 0 0 0 1px #fff"></div>
<svg style="left:632.80px;top:720.80px" width="11.4" height="7.6" viewBox="0 0 12 8"><path d="M0.2 4C2.5-1 9.5-1 11.8 4 9.5 9 2.5 9 0.2 4Z" fill="#333"/><circle cx="6" cy="3.7" r="2.6" fill="#f3f3f3"/><circle cx="6" cy="3.7" r="1.6" fill="#333"/></svg>
<div class="t " style="left:648px;top:718px;font-size:11.7px;color:#333">Toggle editor</div>
<div class="lbl" style="right:1102px;top:482px">Page title</div>
<div class="in" style="left:822px;top:483px;width:605px;height:19px;"></div>
<div class="lbl" style="right:1102px;top:508px">Brand url</div>
<div class="in" style="left:822px;top:509px;width:605px;height:19px;"></div>
<div class="lbl" style="right:1102px;top:534px">Meta descr…</div>
<div class="in" style="left:822px;top:535px;width:605px;height:31px;"></div>
<div class="lbl" style="right:1102px;top:575px">Keywords</div>
<div class="in" style="left:822px;top:576px;width:605px;height:31px;"></div>
<svg style="left:1415px;top:554px" width="9" height="9" viewBox="0 0 9 9"><path d="M0.5 8.5 8.5 0.5M4.5 8.5 8.5 4.5" stroke="#555" stroke-width="1.2" fill="none"/></svg>
<svg style="left:1415px;top:595px" width="9" height="9" viewBox="0 0 9 9"><path d="M0.5 8.5 8.5 0.5M4.5 8.5 8.5 4.5" stroke="#555" stroke-width="1.2" fill="none"/></svg>
<div class="lbl" style="right:1102px;top:616px">Alias</div>
<div class="in" style="left:822px;top:617px;width:605px;height:19px;color:#888;line-height:19px">number-of-classes</div>
<div class="lbl" style="right:1102px;top:642px">Canonical …</div>
<div class="in" style="left:822px;top:643px;width:605px;height:19px;"></div>
<div class="lbl" style="right:1102px;top:668px">Condition</div>
<div class="sel" style="left:822px;top:669px;width:142px;height:19px">New<i></i></div>
<div class="lbl" style="right:392px;top:482px">Quantity pe…</div>
<div class="in" style="left:1534px;top:483px;width:101px;height:19px;line-height:19px;padding-left:5px">0</div>
<div class="t b" style="left:1642px;top:486.5px;font-size:11.6px">To</div>
<div class="in" style="left:1660px;top:483px;width:75px;height:19px;border-radius:3px 0 0 3px;line-height:19px;padding-left:5px">Unlimited</div>
<div class="a" style="left:1734px;top:483px;width:24px;height:19px;background:#eee;border:1px solid #ccc;border-radius:0 3px 3px 0"></div>
<svg style="left:1739px;top:488.7px" width="14" height="7.6" viewBox="0 0 14 7.6"><path d="M7 3.8C5.8 1.8 4.7 1.1 3.5 1.1a2.7 2.7 0 1 0 0 5.4C4.7 6.5 5.8 5.8 7 3.8S9.3 1.1 10.5 1.1a2.7 2.7 0 1 1 0 5.4C9.3 6.5 8.2 5.8 7 3.8Z" fill="none" stroke="#1c1c1c" stroke-width="2.1"/></svg>
<div class="lbl" style="right:392px;top:513px">Available fr…</div>
<div class="in" style="left:1534px;top:512px;width:75px;height:19px;border-radius:3px 0 0 3px"></div>
<div class="a" style="left:1608px;top:512px;width:30px;height:19px;background:#e9e9e9;border:1px solid #bbb;border-radius:0 3px 3px 0"></div>
<svg style="left:1617px;top:515px" width="12" height="12" viewBox="0 0 12 12"><path d="M0.5 2.2H11.5V11.5H0.5Z" fill="#fff" stroke="#333" stroke-width="1"/><path d="M0.5 1.2H11.5V3.6H0.5Z" fill="#333"/><path d="M2.5 5.5h1.4v1.2H2.5zM5.2 5.5h1.4v1.2H5.2zM7.9 5.5h1.4v1.2H7.9zM2.5 7.9h1.4v1.2H2.5zM5.2 7.9h1.4v1.2H5.2zM7.9 7.9h1.4v1.2H7.9z" fill="#333"/></svg>
<div class="t b" style="left:1645.5px;top:514.5px;font-size:11.6px">To</div>
<div class="in" style="left:1662px;top:512px;width:75px;height:19px;border-radius:3px 0 0 3px"></div>
<div class="a" style="left:1736px;top:512px;width:31px;height:19px;background:#e9e9e9;border:1px solid #bbb;border-radius:0 3px 3px 0"></div>
<svg style="left:1745px;top:515px" width="12" height="12" viewBox="0 0 12 12"><path d="M0.5 2.2H11.5V11.5H0.5Z" fill="#fff" stroke="#333" stroke-width="1"/><path d="M0.5 1.2H11.5V3.6H0.5Z" fill="#333"/><path d="M2.5 5.5h1.4v1.2H2.5zM5.2 5.5h1.4v1.2H5.2zM7.9 5.5h1.4v1.2H7.9zM2.5 7.9h1.4v1.2H2.5zM5.2 7.9h1.4v1.2H5.2zM7.9 7.9h1.4v1.2H7.9z" fill="#333"/></svg>
<div class="lbl" style="right:392px;top:537.5px">Access level</div>
<svg style="left:1533px;top:541px" width="7" height="7" viewBox="0 0 7 7"><rect x="0" y="0" width="7" height="7" rx="1" fill="#3a8f3a"/><path d="M1.5 3.6 3 5.1 5.6 1.8" stroke="#fff" stroke-width="1.1" fill="none"/></svg>
<svg style="left:1541px;top:541px" width="8" height="7" viewBox="0 0 8 7"><path d="M0 1.4H2.6L3.2 0.4H5.8V1.4H8V7H0Z" fill="#666"/></svg>
<div class="t " style="left:1549.5px;top:535.5px;font-family:'DejaVu Sans',sans-serif;font-size:11.5px;color:#555">all</div>
<svg style="left:1533px;top:552px" width="7" height="7" viewBox="0 0 7 7"><rect x="0.5" y="0.5" width="6" height="6" fill="#fff" stroke="#aaa" stroke-width="0.8"/><path d="M3.5 1.8V5.2M1.8 3.5H5.2" stroke="#555" stroke-width="0.8"/></svg>
<svg style="left:1544px;top:552px" width="7" height="7" viewBox="0 0 7 7"><rect x="0" y="0" width="7" height="7" rx="1" fill="#3a8f3a"/><path d="M1.5 3.6 3 5.1 5.6 1.8" stroke="#fff" stroke-width="1.1" fill="none"/></svg>
<svg style="left:1552px;top:552px" width="8" height="7" viewBox="0 0 8 7"><path d="M0 1.4H2.6L3.2 0.4H5.8V1.4H8V7H0Z" fill="#666"/></svg>
<div class="t " style="left:1561px;top:546.5px;font-family:'DejaVu Sans',sans-serif;font-size:11.5px;color:#555">Public</div>
<div class="lbl" style="right:392px;top:560.5px">Warehouse</div>
<div class="in" style="left:1532px;top:562px;width:400px;height:20px"></div>
<div class="tag" style="left:1537px;top:565px;width:46px;height:13px;line-height:15.5px"><em>None</em><u>×</u></div>
<div class="lbl" style="right:392px;top:592px">Weight</div>
<div class="in" style="left:1532px;top:594px;width:43px;height:19px;line-height:19px;padding-left:5px">0.000</div>
<div class="sel" style="left:1578px;top:594px;width:61px;height:19px">kg<i></i></div>
<div class="lbl" style="right:392px;top:618px">Volume</div>
<div class="a" style="left:1533px;top:617px;width:21px;height:19px;background:#eee;border:1px solid #ccc;border-radius:3px 0 0 3px"></div>
<svg style="left:1538px;top:622px" width="10" height="9" viewBox="0 0 10 9"><path d="M1 3 4 1.2H9V6L6 8H1Z" fill="#444"/><path d="M1 3H6V8M6 3 9 1.2" stroke="#ddd" stroke-width="0.7" fill="none"/><path d="M1.5 8.6H5.5" stroke="#3a3ad0" stroke-width="1.2" fill="none"/></svg>
<div class="in" style="left:1553px;top:617px;width:42.4px;height:19px;border-radius:0 3px 3px 0;line-height:19px;padding-left:5px">0.000</div>
<div class="a" style="left:1599.2px;top:617px;width:21px;height:19px;background:#eee;border:1px solid #ccc;border-radius:3px 0 0 3px"></div>
<svg style="left:1604.2px;top:622px" width="10" height="9" viewBox="0 0 10 9"><path d="M1 3 4 1.2H9V6L6 8H1Z" fill="#444"/><path d="M1 3H6V8M6 3 9 1.2" stroke="#ddd" stroke-width="0.7" fill="none"/><path d="M1.5 8.6H5.5" stroke="#3a3ad0" stroke-width="1.2" fill="none"/></svg>
<div class="in" style="left:1619.2px;top:617px;width:42.4px;height:19px;border-radius:0 3px 3px 0;line-height:19px;padding-left:5px">0.000</div>
<div class="a" style="left:1665.6px;top:617px;width:21px;height:19px;background:#eee;border:1px solid #ccc;border-radius:3px 0 0 3px"></div>
<svg style="left:1670.6px;top:622px" width="10" height="9" viewBox="0 0 10 9"><path d="M1 3 4 1.2H9V6L6 8H1Z" fill="#444"/><path d="M1 3H6V8M6 3 9 1.2" stroke="#ddd" stroke-width="0.7" fill="none"/><path d="M0.6 3.5V7.5" stroke="#3a3ad0" stroke-width="1.2" fill="none"/></svg>
<div class="in" style="left:1685.6px;top:617px;width:42.4px;height:19px;border-radius:0 3px 3px 0;line-height:19px;padding-left:5px">0.000</div>
<div class="sel" style="left:1731.6px;top:617px;width:38.4px;height:19px">m<i></i></div>
<div class="lbl" style="right:1813px;top:792px">Characteris…</div>
<div class="box" style="left:112px;top:790px;width:594px;height:64px"></div>
<div class="a" style="left:113px;top:817px;width:592px;height:22px;background:linear-gradient(#f5f5f5,#fafafa)"></div>
<div class="a" style="left:113px;top:816px;width:592px;height:1px;background:#ddd"></div>
<div class="t b" style="left:189px;top:798px;font-size:11.6px">Name</div>
<div class="t " style="left:189px;top:821.5px;font-size:11.6px;color:#444">Number of Classes</div>
<svg style="left:118px;top:824px" width="5" height="10" viewBox="0 0 5 10"><path d="M2.5 0 5 2.6H0ZM2.5 10 5 7.4H0Z" fill="#333"/><circle cx="2.5" cy="5" r="1.5" fill="#333"/><path d="M2.5 2V8" stroke="#333" stroke-width="1.2"/></svg>
<svg style="left:681.5px;top:801px" width="10" height="10" viewBox="0 0 10 10"><path d="M5 0V10M0 5H10" stroke="#2a69a8" stroke-width="1.9" fill="none"/></svg>
<svg style="left:681px;top:822px" width="11" height="12" viewBox="0 0 11 12"><path d="M0 1.6H3.5L4.2 0.6H6.8L7.5 1.6H11V3H0ZM1 3.8H10L9.4 11Q9.3 12 8.4 12H2.6Q1.7 12 1.6 11Z" fill="#2a69a8"/></svg>
<div class="lbl" style="right:1813px;top:856.5px">Related pro…</div>
<div class="in" style="left:112px;top:858px;width:594px;height:20px;"></div>
<div class="lbl" style="right:1813px;top:884px">Options</div>
<div class="in" style="left:112px;top:885px;width:594px;height:20px;"></div>
<div class="lbl" style="right:1813px;top:910.5px">Bundled pr…</div>
<div class="box" style="left:112px;top:909px;width:594px;height:41px"></div>
<div class="t b" style="left:118px;top:916.5px;font-size:11.6px">Name</div>
<div class="t b" style="left:356px;top:916.5px;font-size:11.6px">Quantity</div>
<svg style="left:681.5px;top:919px" width="10" height="10" viewBox="0 0 10 10"><path d="M5 0V10M0 5H10" stroke="#2a69a8" stroke-width="1.9" fill="none"/></svg>
<div class="lbl" style="right:1102px;top:792px">Page layout</div>
<div class="sel" style="left:822px;top:793px;width:142px;height:19px">Inherit<i></i></div>
<div class="lbl" style="right:1102px;top:816.5px">Quantity in…</div>
<div class="sel" style="left:822px;top:818px;width:142px;height:19px">Inherit<i></i></div>
<div class="t b" style="left:1455.5px;top:784px;font-size:11.6px">User group …</div>
<div class="a" style="left:1536px;top:782px;width:105px;height:21.5px;background:#fff;border:1px solid #c4c4c4;border-radius:3px"></div>
<div class="a" style="left:1536px;top:782px;width:47px;height:21.5px;background:#2384d3;border:1px solid #1f78c0;border-radius:3px 0 0 3px"></div>
<div class="t " style="left:1545px;top:785.6px;color:#fff;font-size:12px">None</div>
<div class="t " style="left:1590.5px;top:785.6px;color:#444;font-size:12px">Custom</div>
</body></html>
